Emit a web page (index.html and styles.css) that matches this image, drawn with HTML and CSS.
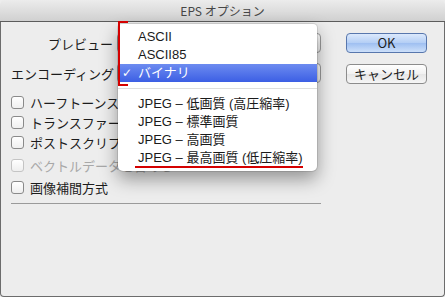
FILE: index.html
```html
<!DOCTYPE html>
<html lang="ja">
<head>
    <meta charset="UTF-8">
    <title>EPS オプション</title>
    <link rel="stylesheet" href="styles.css">
</head>
<body>
    <div class="window">
        <div class="titlebar">EPS オプション</div>
        <div class="content">
            <div class="form">
                <div class="field">
                    <label>プレビュー</label>
                    <div class="popup"></div>
                </div>
                <div class="field">
                    <label>エンコーディング</label>
                    <div class="popup"></div>
                </div>
                <div class="checks">
                    <div class="check"><span class="box"></span>ハーフトーンスクリーンを含める</div>
                    <div class="check"><span class="box"></span>トランスファー関数を含める</div>
                    <div class="check"><span class="box"></span>ポストスクリプトカラーマネジメント</div>
                    <div class="check disabled"><span class="box"></span>ベクトルデータを含める</div>
                    <div class="check last"><span class="box"></span>画像補間方式</div>
                </div>
                <div class="rule"></div>
            </div>
            <div class="buttons">
                <div class="btn default">OK</div>
                <div class="btn">キャンセル</div>
            </div>
        </div>

        <!-- menu open over the encoding popup -->
        <div class="menu">
            <div class="item"><span class="tick"></span>ASCII</div>
            <div class="item"><span class="tick"></span>ASCII85</div>
            <div class="item selected"><span class="tick">✓</span>バイナリ</div>
            <div class="sep"></div>
            <div class="item"><span class="tick"></span>JPEG – 低画質 (高圧縮率)</div>
            <div class="item"><span class="tick"></span>JPEG – 標準画質</div>
            <div class="item"><span class="tick"></span>JPEG – 高画質</div>
            <div class="item"><span class="tick"></span>JPEG – 最高画質 (低圧縮率)</div>
        </div>

        <!-- red marks -->
        <div class="note-bracket"></div>
        <div class="note-line"></div>
    </div>
</body>
</html>
```

FILE: styles.css
```css
body { margin: 0; background: #ededed; }
.window { position: relative; width: 445px; height: 297px; overflow: hidden; font-family: "Noto Sans CJK JP", sans-serif; font-size: 13px; color: #1c1c1c; }
.titlebar { height: 21px; line-height: 21px; border-bottom: 1px solid #5c5c5c; background: linear-gradient(#ececec, #d0d0d0); text-align: center; font-size: 12px; color: #464646; border-radius: 5px 5px 0 0; }
.content { display: flex; gap: 25px; height: 275px; box-sizing: border-box; padding: 11px 17px 0 10px; background: #ededed; border: 1px solid #6c6c6c; border-top: none; border-radius: 0 0 4px 4px; }

.form { width: 310px; }
.field { display: flex; align-items: center; gap: 4px; height: 20px; }
.field + .field { margin-top: 10px; }
.field label { width: 102px; text-align: right; white-space: nowrap; }
.popup { flex: 1; height: 20px; box-sizing: border-box; border: 1px solid #9a9a9a; border-radius: 4px; background: linear-gradient(#ffffff, #ebebeb); }

.checks { margin-top: 9px; }
.check { display: flex; align-items: center; gap: 6px; height: 20px; white-space: nowrap; }
.check.disabled { margin-top: 3px; color: #a8a8a8; }
.check.last { margin-top: 2px; }
.box { width: 13px; height: 13px; box-sizing: border-box; border: 1px solid #8a8a8a; border-radius: 3px; background: linear-gradient(#ffffff, #efefef); }
.disabled .box { border-color: #c4c4c4; }
.rule { margin-top: 6px; border-top: 1px solid #9a9a9a; }

.buttons { display: flex; flex-direction: column; gap: 11px; width: 81px; }
.btn { height: 20px; box-sizing: border-box; line-height: 18px; text-align: center; border: 1px solid #8c8c8c; border-radius: 4px; background: linear-gradient(#ffffff, #f1f1f1 50%, #e6e6e6 51%, #f6f6f6); }
.btn.default { border-color: #5877ad; background: linear-gradient(#dce9fc, #b3cef5 50%, #9ebff1 51%, #cde0fa); }

.menu { position: absolute; left: 118px; top: 24px; width: 199px; height: 147px; box-sizing: border-box; padding: 4px 0; background: #fff; border-radius: 4px 4px 5px 5px; box-shadow: 0 0 0 1px rgba(0, 0, 0, 0.1), 0 8px 18px rgba(0, 0, 0, 0.38); font-family: "Liberation Sans", "Noto Sans CJK JP", sans-serif; font-size: 13px; color: #1a1a1a; }
.item { display: flex; height: 18px; line-height: 18px; white-space: nowrap; }
.tick { width: 16px; padding-left: 4px; font-family: "DejaVu Sans", sans-serif; font-size: 12px; font-weight: bold; }
.item.selected { color: #fff; background: linear-gradient(#6d8cf0, #3c5fe4); }
.sep { margin: 6px 0; border-top: 1px solid #dedede; }

.note-bracket { position: absolute; left: 118px; top: 21px; width: 10px; height: 65px; box-sizing: border-box; border: 2px solid #d40000; border-right: none; }
.note-line { position: absolute; left: 135px; top: 166px; width: 168px; height: 2px; background: #d40000; }
```
